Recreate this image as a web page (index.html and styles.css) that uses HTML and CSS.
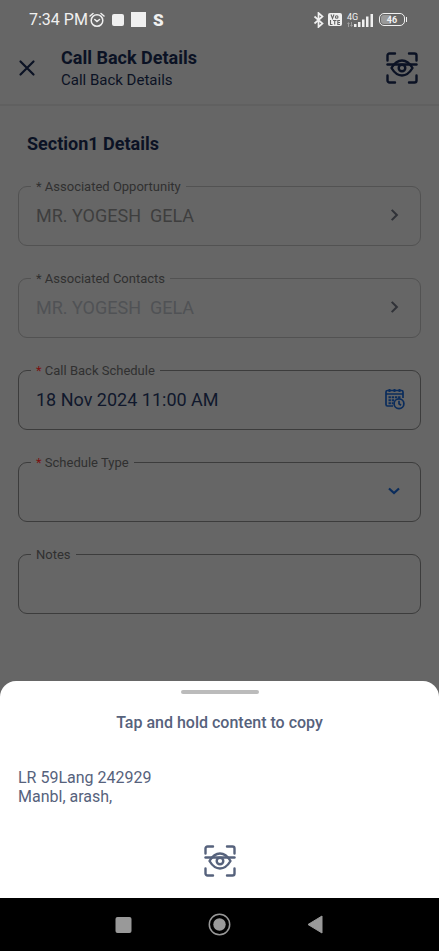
FILE: index.html
```html
<!DOCTYPE html>
<html lang="en">
<head>
<meta charset="utf-8">
<meta name="viewport" content="width=device-width, initial-scale=1">
<title>Call Back Details</title>
<link rel="stylesheet" href="styles.css">
</head>
<body>
<svg class="sprite" aria-hidden="true">
  <symbol id="scan" viewBox="0 0 32 32">
    <g fill="none" stroke="currentColor" stroke-width="2.4" stroke-linecap="round" stroke-linejoin="round">
      <path d="M1.5 8.5V3.5a2 2 0 0 1 2-2H9M23 1.5h5.500a2 2 0 0 1 2 2v5M30.500 23.500v5a2 2 0 0 1-2 2H23M9 30.500H3.500a2 2 0 0 1-2-2v-5"/>
      <path d="M1.500 12.500h29"/>
      <path d="M5.500 16C8.500 11 12 8.500 16 8.500S23.500 11 26.500 16C23.500 21 20 23.500 16 23.500S8.500 21 5.500 16Z"/>
      <circle cx="16" cy="16" r="3.300"/>
    </g>
  </symbol>
  <symbol id="chevron" viewBox="0 0 14 14">
    <path d="M5 2.500 9.500 7 5 11.500" fill="none" stroke="currentColor" stroke-width="1.800"/>
  </symbol>
</svg>

<div class="status">
  <span class="clock">7:34 PM</span>
  <svg class="alarm" width="16" height="16" viewBox="0 0 16 16" fill="none" stroke="currentColor" stroke-width="1.500" stroke-linecap="round">
    <circle cx="8" cy="8.500" r="5.800"/><path d="M1 4 4 1.500M15 4l-3-2.500M5.800 7.500 8 9.500l2.500-2"/>
  </svg>
  <span class="notice notice-small"></span>
  <span class="notice"></span>
  <span class="notice-letter">S</span>
  <span class="signals">
    <svg width="12" height="16" viewBox="0 0 12 16" fill="none" stroke="currentColor" stroke-width="1.700"><path d="m1.500 4.500 8 7L5.500 15V1l4 3.500-8 7"/></svg>
    <svg width="14" height="13" viewBox="0 0 14 13"><rect width="14" height="13" rx="2" fill="currentColor"/><g fill="none" stroke="#666" stroke-width="1.100"><path d="m3 1.500 1.500 4L6 1.500M2.500 7v4.500h2M5 7.500h3.500M6.700 7.500v4M12 7.500H9.800v4H12M9.800 9.500H12"/><circle cx="8.700" cy="4" r="1.300"/></g></svg>
    <span class="network">
      <span class="network-type">4G</span>
      <svg width="27" height="14" viewBox="0 0 27 14" fill="currentColor"><path d="M7 11h2.500v3H7zM11 9h2.500v5H11zM15 6.500h2.500V14H15zM19 3.500h2.500V14H19zM23.500 1H26v13h-2.500z"/><path opacity=".4" d="m0 11 1.500-2L3 11H2v3H1v-3zm3 1h1V9h1v3h1l-1.500 2z"/></svg>
    </span>
    <span class="battery"><span class="battery-level">46</span></span>
  </span>
</div>

<header class="header">
  <button class="icon-button" type="button" aria-label="Close">
    <svg width="18" height="18" viewBox="0 0 18 18" fill="none" stroke="currentColor" stroke-width="2.200" stroke-linecap="round"><path d="m2.500 2.500 13 13m0-13-13 13"/></svg>
  </button>
  <div class="titles">
    <h1>Call Back Details</h1>
    <p>Call Back Details</p>
  </div>
  <button class="icon-button" type="button" aria-label="Scan"><svg width="32" height="32"><use href="#scan"/></svg></button>
</header>

<main class="content">
  <h2>Section1 Details</h2>
  <form class="form">
    <fieldset class="field field-disabled">
      <legend><label for="opportunity">* Associated Opportunity</label></legend>
      <div class="row">
        <input id="opportunity" type="text" value="MR. YOGESH  GELA" readonly>
        <button class="icon-button" type="button" aria-label="Open opportunity"><svg width="16" height="16"><use href="#chevron"/></svg></button>
      </div>
    </fieldset>
    <fieldset class="field field-disabled field-faint">
      <legend><label for="contacts">* Associated Contacts</label></legend>
      <div class="row">
        <input id="contacts" type="text" value="MR. YOGESH  GELA" readonly>
        <button class="icon-button" type="button" aria-label="Open contacts"><svg width="16" height="16"><use href="#chevron"/></svg></button>
      </div>
    </fieldset>
    <fieldset class="field">
      <legend><label for="schedule"><span class="required">*</span> Call Back Schedule</label></legend>
      <div class="row">
        <input id="schedule" type="text" value="18 Nov 2024 11:00 AM">
        <button class="icon-button accent" type="button" aria-label="Pick date">
          <svg width="20" height="22" viewBox="0 0 20 22" fill="none" stroke="currentColor" stroke-width="1.700">
            <path d="M8 18H2.500A1.500 1.500 0 0 1 1 16.500V4a1.500 1.500 0 0 1 1.500-1.500h14A1.500 1.500 0 0 1 18 4v6M1 6h17"/>
            <path d="M4.500 1v3M9.500 1v3M14.500 1v3" stroke-width="2"/>
            <path d="M3.500 9.200h12.500M3.500 12.200h6M3.500 15.200h5" stroke-width="2" stroke-dasharray="2.400 .8"/>
            <circle cx="14" cy="15.800" r="4.900"/><path d="M14 12.800v3l2 1.500"/>
          </svg>
        </button>
      </div>
    </fieldset>
    <fieldset class="field">
      <legend><label for="type"><span class="required">*</span> Schedule Type</label></legend>
      <div class="row">
        <select id="type"><option value=""></option></select>
        <svg class="accent" width="16" height="16" viewBox="0 0 16 16" fill="none" stroke="currentColor" stroke-width="2.200"><path d="m3 5.500 5 4.500 5-4.500"/></svg>
      </div>
    </fieldset>
    <fieldset class="field">
      <legend><label for="notes">Notes</label></legend>
      <div class="row"><input id="notes" type="text"></div>
    </fieldset>
  </form>
</main>

<section class="sheet">
  <span class="handle"></span>
  <h2>Tap and hold content to copy</h2>
  <p>LR 59Lang 242929<br>Manbl, arash,</p>
  <button class="icon-button" type="button" aria-label="Scan again"><svg width="32" height="32"><use href="#scan"/></svg></button>
</section>

<nav class="navbar">
  <button class="icon-button" type="button" aria-label="Recent apps"><svg width="24" height="24" viewBox="0 0 24 24"><rect x="3.500" y="4" width="16" height="16" rx="2" fill="currentColor"/></svg></button>
  <button class="icon-button" type="button" aria-label="Home"><svg width="24" height="24" viewBox="0 0 24 24"><circle cx="11.500" cy="11.500" r="10.200" fill="none" stroke="currentColor" stroke-width="1.500"/><circle cx="11.500" cy="11.500" r="6.200" fill="currentColor"/></svg></button>
  <button class="icon-button" type="button" aria-label="Back"><svg width="24" height="24" viewBox="0 0 24 24"><path d="M4 11.500 18 3v17z" fill="currentColor" stroke="currentColor" stroke-linejoin="round"/></svg></button>
</nav>
</body>
</html>
```
FILE: styles.css
```css
* {
  box-sizing: border-box;
}

body {
  display: flex;
  flex-direction: column;
  min-height: 100vh;
  margin: 0;
  background: #666;
  color: #0b1224;
  font-family: Roboto, sans-serif;
}

h1,
h2,
p {
  margin: 0;
}

svg {
  display: block;
  flex: none;
}

.sprite {
  position: absolute;
  width: 0;
  height: 0;
}

.icon-button {
  display: flex;
  padding: 0;
  border: 0;
  background: none;
  color: inherit;
}

.status {
  display: flex;
  align-items: center;
  height: 39px;
  padding: 0 32px 0 29px;
  color: #f0f0f0;
}

.clock {
  font-size: 16px;
}

.alarm {
  margin-left: 1px;
}

.notice {
  width: 15px;
  height: 15px;
  margin-left: 7px;
  background: #f0f0f0;
}

.notice-small {
  width: 12px;
  height: 12px;
  border-radius: 2px;
}

.notice-letter {
  margin-left: 7px;
  font-size: 17px;
  font-weight: 900;
}

.signals {
  display: flex;
  align-items: center;
  gap: 3px;
  margin-left: auto;
}

.network {
  display: grid;
  margin: 0 2px;
}

.network > * {
  grid-area: 1 / 1;
}

.network-type {
  font-size: 9px;
  line-height: 8px;
}

.battery {
  display: flex;
  position: relative;
  width: 26px;
  height: 13px;
  margin-right: 2px;
  padding: 1px;
  border: 1px solid #f0f0f0;
  border-radius: 5px;
}

.battery::after {
  content: "";
  position: absolute;
  top: 3px;
  right: -3px;
  width: 1px;
  height: 5px;
  background: #f0f0f0;
}

.battery-level {
  flex: 1;
  border-radius: 3px;
  background: linear-gradient(90deg, #999 46%, transparent 46%);
  font-size: 9px;
  font-weight: 700;
  line-height: 10px;
  text-align: center;
}

.header {
  display: flex;
  align-items: center;
  height: 67px;
  padding: 0 21px 8px 18px;
  border-bottom: 2px solid #606060;
}

.titles {
  flex: 1;
  margin-left: 25px;
}

.titles h1 {
  font-size: 18px;
  font-weight: 700;
  line-height: 24px;
}

.titles p {
  font-size: 15px;
  line-height: 20px;
}

.content {
  padding: 26px 18px;
}

.content h2 {
  padding-left: 9px;
  font-size: 18px;
  font-weight: 700;
  line-height: 24px;
}

.form {
  display: grid;
  gap: 23px;
  margin-top: 21px;
}

.field {
  min-width: 0;
  margin: 0;
  padding: 0 12px 10px;
  border: 1px solid #3c3c3c;
  border-radius: 9px;
}

.field legend {
  padding: 2px 5px 0;
  color: #303030;
  font-size: 13px;
  line-height: 16px;
}

.required {
  color: #7c1010;
}

.row {
  display: flex;
  align-items: center;
  height: 40px;
  padding: 0 5px;
}

.row > :not(:first-child) {
  margin-right: 1px;
}

.row input,
.row select {
  flex: 1;
  min-width: 0;
  height: 40px;
  padding: 0;
  border: 0;
  outline: 0;
  background: none;
  color: #10182c;
  font: 18px/24px Roboto, sans-serif;
  appearance: none;
}

.field-disabled {
  border-color: #525252;
}

.field-disabled input {
  color: #3e3e3e;
}

.field-faint input {
  color: #505255;
}

.field-disabled .icon-button {
  color: #303238;
}

.row .accent {
  color: #0a2c5c;
}

.row button.accent {
  margin-right: -2px;
}

.sheet {
  display: flex;
  flex-direction: column;
  align-items: center;
  margin-top: auto;
  padding: 9px 18px 21px;
  border-radius: 16px 16px 0 0;
  background: #fff;
  color: #56627c;
}

.handle {
  width: 78px;
  height: 4px;
  border-radius: 2px;
  background: #bbb;
}

.sheet h2 {
  margin-top: 19px;
  font-size: 16px;
  font-weight: 500;
  line-height: 20px;
}

.sheet p {
  align-self: stretch;
  margin: 35px 0 39px;
  font-size: 16px;
  line-height: 19px;
}

.navbar {
  display: flex;
  justify-content: center;
  align-items: center;
  gap: 72px;
  height: 53px;
  background: #000;
  color: #999;
}
```
